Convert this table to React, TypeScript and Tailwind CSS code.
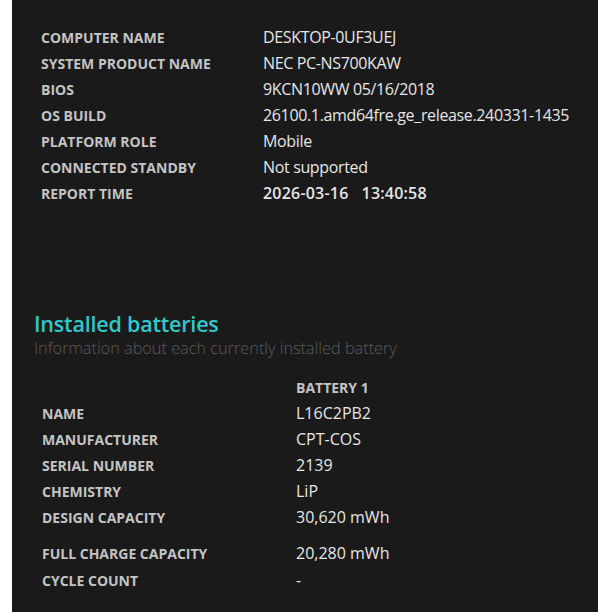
import React from "react";

const sys: [string, string, boolean?][] = [
  ["COMPUTER NAME", "DESKTOP-0UF3UEJ"],
  ["SYSTEM PRODUCT NAME", "NEC PC-NS700KAW"],
  ["BIOS", "9KCN10WW 05/16/2018"],
  ["OS BUILD", "26100.1.amd64fre.ge_release.240331-1435"],
  ["PLATFORM ROLE", "Mobile"],
  ["CONNECTED STANDBY", "Not supported"],
  ["REPORT TIME", "2026-03-16\u00a0\u00a0\u00a013:40:58", true],
];

const bat: [string, string, string][] = [
  ["NAME", "L16C2PB2", "h-[26px]"],
  ["MANUFACTURER", "CPT-COS", "h-[26px]"],
  ["SERIAL NUMBER", "2139", "h-[26px]"],
  ["CHEMISTRY", "LiP", "h-[26px]"],
  ["DESIGN CAPACITY", "30,620 mWh", "h-[26px] mb-[9px]"],
  ["FULL CHARGE CAPACITY", "20,280 mWh", "h-[27px]"],
  ["CYCLE COUNT", "-", "h-[27px]"],
];

export default function App() {
  return (
    <div
      className="w-[612px] h-[612px] bg-white overflow-hidden"
      style={{ fontFamily: '"Open Sans", "Noto Sans", sans-serif' }}
    >
      <div className="ml-[12px] w-[586px] h-[612px] bg-[#1a1a1a] flex flex-col">
        <div className="pt-[24px] pl-[29px] flex flex-col">
          {sys.map(([k, v, b]) => (
            <div key={k} className="flex items-center h-[26px]">
              <div className="w-[222px] text-[14px] font-bold text-[#c4c4c4] pt-[1px]">{k}</div>
              <div
                className={
                  "text-[16px] text-[#e6e6e6] " +
                  (b ? "font-semibold tracking-[0.2px]" : "tracking-[-0.35px]")
                }
              >
                {v}
              </div>
            </div>
          ))}
        </div>
        <div className="mt-[105px] pl-[22px] flex flex-col">
          <div className="h-[26px] flex items-center text-[21.5px] font-semibold text-[#2ec9cc] tracking-[-0.2px]">
            Installed batteries
          </div>
          <div className="h-[24px] flex items-center text-[16.3px] font-light text-[#5c5c5c] -mt-[1px]">
            Information about each currently installed battery
          </div>
        </div>
        <div className="mt-[14px] pl-[30px] flex flex-col">
          <div className="flex items-center h-[26px]">
            <div className="w-[254px]"></div>
            <div className="text-[14px] font-bold text-[#c4c4c4]">BATTERY 1</div>
          </div>
          {bat.map(([k, v, h]) => (
            <div key={k} className={"flex items-center " + h}>
              <div className="w-[254px] text-[14px] font-bold text-[#c4c4c4] pt-[1px]">{k}</div>
              <div className="text-[16px] text-[#e6e6e6]">{v}</div>
            </div>
          ))}
        </div>
      </div>
    </div>
  );
}
